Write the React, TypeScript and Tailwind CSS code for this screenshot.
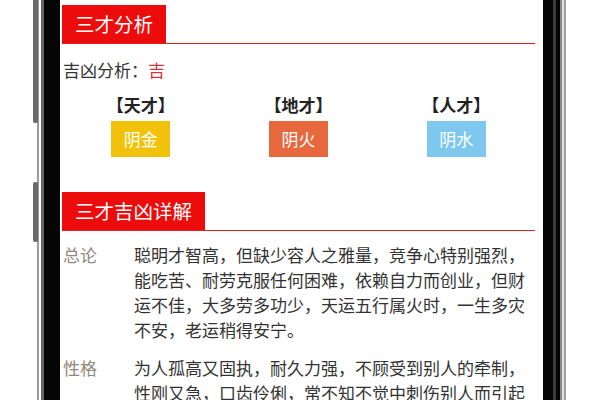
import React from "react"

const font = { fontFamily: '"Noto Sans CJK SC", "Noto Sans", sans-serif' }

function SectionHeader({ title }: { title: string }) {
  return (
    <div className="flex border-b border-[#e02020]">
      <div className="h-[38px] px-[13px] bg-[#ec0c0c] text-white text-[19.5px] leading-[38px]">{title}</div>
    </div>
  )
}

export default function App() {
  const cai = [
    { label: "【天才】", value: "阴金", color: "bg-[#f2c20a]" },
    { label: "【地才】", value: "阴火", color: "bg-[#e8683e]" },
    { label: "【人才】", value: "阴水", color: "bg-[#7ec8f0]" },
  ]

  const details = [
    {
      title: "总论",
      lines: [
        "聪明才智高，但缺少容人之雅量，竞争心特别强烈，",
        "能吃苦、耐劳克服任何困难，依赖自力而创业，但财",
        "运不佳，大多劳多功少，天运五行属火时，一生多灾",
        "不安，老运稍得安宁。",
      ],
    },
    {
      title: "性格",
      lines: [
        "为人孤高又固执，耐久力强，不顾受到别人的牵制，",
        "性刚又急，口齿伶俐，常不知不觉中刺伤别人而引起",
      ],
    },
  ]

  return (
    <div className="relative w-[600px] h-[400px] bg-white overflow-hidden flex pl-[37px]" style={font}>
      {/* phone frame, left side */}
      <div className="w-[2px] bg-[#9a9a9a]" />
      <div className="w-[2px] bg-white" />
      <div className="w-[3px] bg-[#666]" />
      <div className="w-[16px] bg-[#050505]" />
      <div className="absolute left-[33px] top-0 w-[5px] h-[123px] bg-[#6a6a6a] rounded-b-[2px]" />
      <div className="absolute left-[33px] top-[182px] w-[5px] h-[60px] bg-[#6a6a6a] rounded-[2px]" />

      {/* screen */}
      <div className="w-[483px] pl-[2px] pr-[8px] pt-[5px] text-[#333]">
        <SectionHeader title="三才分析" />
        <div className="mt-[13px] pl-[1px] text-[17px] leading-[25px] text-[#333]">
          吉凶分析：<span className="text-[#d0343c]">吉</span>
        </div>
        <div className="grid grid-cols-3 mt-[11px]">
          {cai.map((c) => (
            <div key={c.label} className="flex flex-col items-center">
              <div className="text-[17px] leading-[24px] font-bold text-[#222]">{c.label}</div>
              <div className={`mt-[4px] w-[59px] h-[36px] flex items-center justify-center text-white text-[17px] ${c.color}`}>
                {c.value}
              </div>
            </div>
          ))}
        </div>

        <div className="mt-[35px]">
          <SectionHeader title="三才吉凶详解" />
        </div>

        <div className="mt-[11px] flex flex-col gap-[13px]">
          {details.map((d) => (
            <div key={d.title} className="flex text-[17px] leading-[25px]">
              <div className="w-[72px] pl-[1px] shrink-0 text-[#8e8a78]">{d.title}</div>
              <div className="text-[#333]">
                {d.lines.map((l) => (
                  <div key={l} className="whitespace-nowrap">{l}</div>
                ))}
              </div>
            </div>
          ))}
        </div>
      </div>

      {/* phone frame, right side */}
      <div className="w-[10px] bg-[#050505]" />
      <div className="w-[3px] bg-[#3c3c3c]" />
      <div className="w-[4px] bg-[#050505]" />
      <div className="w-[2px] bg-[#8a8a8a]" />
      <div className="w-[2px] bg-[#e2e2e2]" />
      <div className="w-[2px] bg-[#a0a0a0]" />
    </div>
  )
}
